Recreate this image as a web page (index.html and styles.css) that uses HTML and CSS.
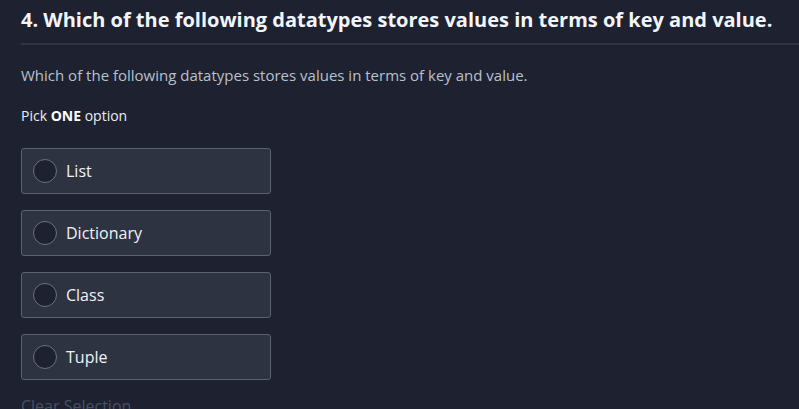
FILE: index.html
```html
<!DOCTYPE html>
<html lang="en">
<head>
<meta charset="utf-8">
<title>Question 4</title>
<link rel="stylesheet" href="styles.css">
</head>
<body>
<main class="question">
  <h1 class="q-title">4. Which of the following datatypes stores values in terms of key and value.</h1>
  <div class="q-body">
    <p class="q-desc">Which of the following datatypes stores values in terms of key and value.</p>
    <p class="q-hint">Pick <strong>ONE</strong> option</p>
    <ul class="options">
      <li class="option"><span class="radio"></span><span class="opt-label">List</span></li>
      <li class="option"><span class="radio"></span><span class="opt-label">Dictionary</span></li>
      <li class="option"><span class="radio"></span><span class="opt-label">Class</span></li>
      <li class="option"><span class="radio"></span><span class="opt-label">Tuple</span></li>
    </ul>
    <div class="clear">Clear Selection</div>
  </div>
</main>
</body>
</html>
```
FILE: styles.css
```css
html, body {
  margin: 0;
  padding: 0;
  background: #1e2230;
  height: 100%;
  overflow: hidden;
}
body {
  font-family: "Open Sans", "Noto Sans", sans-serif;
  color: #e8edf5;
}
.question {
  padding-left: 21px;
}
.q-title {
  margin: 0;
  padding-top: 6px;
  padding-bottom: 9px;
  font-size: 20px;
  line-height: 28px;
  font-weight: 700;
  color: #f2f6fc;
  border-bottom: 2px solid #2f3442;
}
.q-body {
  padding-top: 20px;
}
.q-desc {
  margin: 0;
  font-size: 15px;
  line-height: 20px;
  color: #b9c0cd;
}
.q-hint {
  margin: 21px 0 0;
  font-size: 14px;
  line-height: 20px;
  color: #e8edf5;
}
.q-hint strong {
  font-weight: 700;
  color: #ffffff;
}
.options {
  list-style: none;
  margin: 22px 0 0;
  padding: 0;
  display: flex;
  flex-direction: column;
  gap: 16px;
  width: 250px;
}
.option {
  box-sizing: border-box;
  height: 46px;
  display: flex;
  align-items: center;
  gap: 9px;
  padding-left: 11px;
  background: #2e3341;
  border: 1px solid #5b6272;
  border-radius: 3px;
}
.radio {
  box-sizing: border-box;
  width: 24px;
  height: 24px;
  border-radius: 50%;
  border: 1px solid #6b7282;
  background: #1e2230;
  flex: none;
}
.opt-label {
  font-size: 16px;
  line-height: 22px;
  color: #eef2f8;
}
.clear {
  margin-top: 15px;
  font-size: 16px;
  line-height: 22px;
  color: #465163;
}
```
